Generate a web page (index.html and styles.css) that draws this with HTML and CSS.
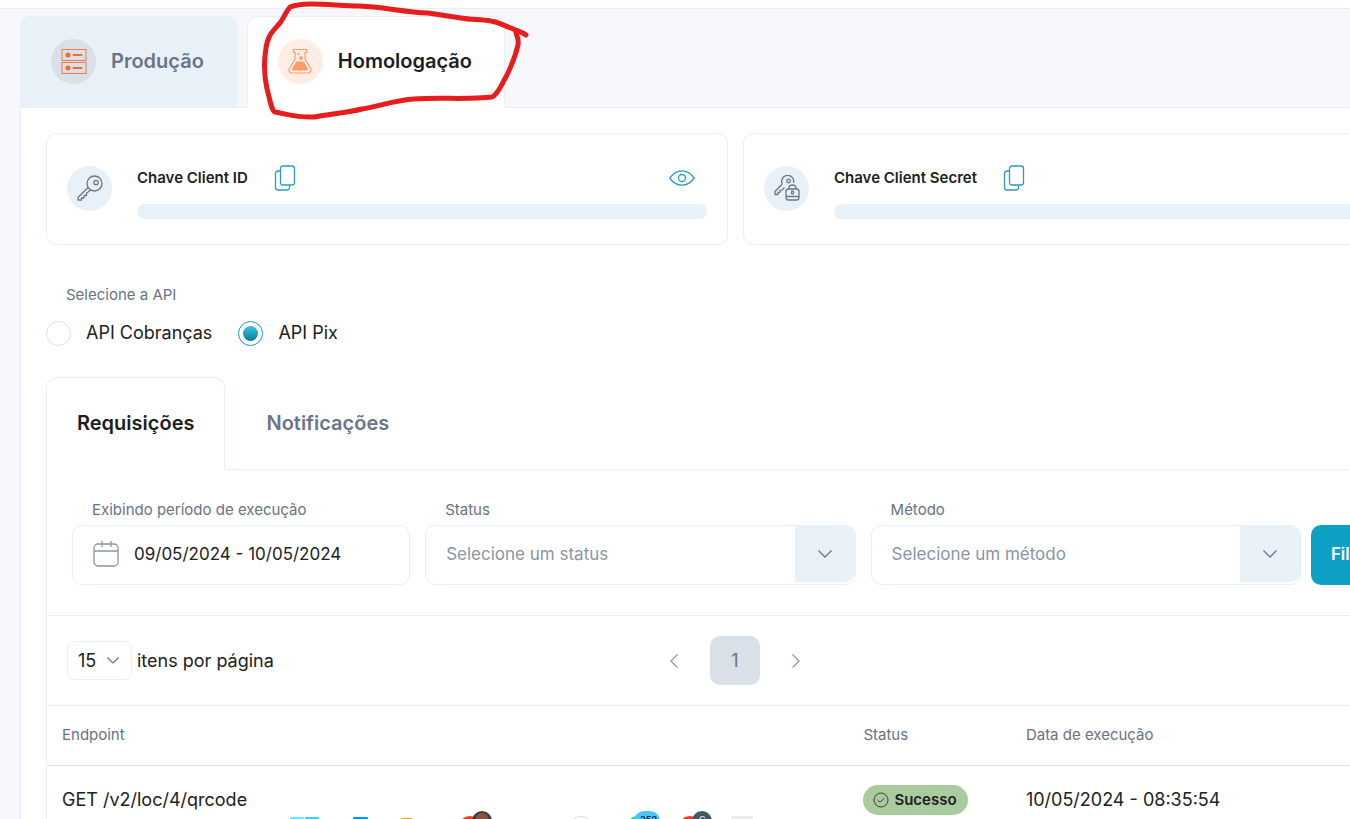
FILE: index.html
```html
<!DOCTYPE html>
<html lang="pt-BR">
<head>
<meta charset="utf-8">
<title>Credenciais da API</title>
<link rel="stylesheet" href="styles.css">
</head>
<body>
<svg class="defs" aria-hidden="true">
  <defs>
    <symbol id="copy" viewBox="0 0 22 26"><rect x="6.500" y="1" width="14" height="19" rx="2.500"/><path d="M6.500 6H4a2.500 2.500 0 0 0-2.500 2.500v14A2.500 2.500 0 0 0 4 25h9a2.500 2.500 0 0 0 2.500-2.500V20"/></symbol>
    <symbol id="chevron" viewBox="0 0 14 8"><path d="M.5.5 7 7 13.500.5"/></symbol>
  </defs>
</svg>
<header class="topbar"></header>
<main class="page">
  <nav class="env-tabs">
    <button class="env-tab env-off" type="button">
      <span class="disc disc-grey"><svg class="server" width="26" height="27" viewBox="0 0 26 27"><rect x="1" y="1.500" width="24" height="11"/><rect x="1" y="14.500" width="24" height="11"/><path class="bar" d="M12.500 7h8M12.500 20h8"/><circle cx="7" cy="7" r="2.500"/><circle cx="7" cy="20" r="2.500"/></svg></span>
      Produção
    </button>
    <button class="env-tab env-on" type="button">
      <span class="disc disc-peach"><svg class="flask" width="24" height="27" viewBox="0 0 24 27"><path d="M5.500 1.500h13v3h-1.500v6.500l5 8.500c2 3.500.8 5.500-2 5.500H4c-2.800 0-4-2-2-5.500L7 11V4.500H5.500z"/><path class="liquid" d="M8.500 13.500h7l3.500 5.500c1.500 2.500.8 3.500-1 3.500H6c-1.800 0-2.500-1-1-3.500z"/><circle cx="10.500" cy="6" r="1.100"/><circle cx="13" cy="10" r="1.900"/></svg></span>
      Homologação
    </button>
  </nav>

  <section class="panel">
    <div class="keys">
      <article class="key-card">
        <span class="disc disc-blue"><svg class="line-icon" width="26" height="26" viewBox="0 0 26 26"><circle cx="17.500" cy="8.500" r="7.500"/><circle cx="19" cy="7.500" r="2.200"/><path d="M11 12.500 1 22.500V25h3.500v-2H7v-2.500h2.500v-2.200l4.200-3.300"/></svg></span>
        <div class="key-body">
          <div class="key-head"><h2>Chave Client ID</h2>
            <button class="icon-btn" type="button" aria-label="Copiar Client ID"><svg class="blue-icon" width="22" height="26"><use href="#copy"/></svg></button>
            <button class="icon-btn eye" type="button" aria-label="Mostrar Client ID"><svg class="blue-icon" width="26" height="16" viewBox="0 0 26 16"><path d="M.8 8C4 3.500 8 .8 13 .8S22 3.500 25.200 8C22 12.500 18 15.200 13 15.200S4 12.500.8 8z"/><circle cx="13" cy="8" r="3.500"/></svg></button>
          </div>
          <div class="mask"></div>
        </div>
      </article>
      <article class="key-card">
        <span class="disc disc-blue"><svg class="line-icon" width="26" height="26" viewBox="0 0 26 26"><path d="M8.300 9a6 6 0 1 1 11.200-1M8.300 9 1 16.500v3h3v-2l2-.2v-2l2-.2 2.500-2.600"/><circle cx="14.500" cy="6" r="1.800"/><rect x="12" y="14" width="13" height="11" rx="2.500"/><path d="M15 14v-1c0-4 7-4 7 0v1M12 21.500h13"/><rect x="17.500" y="16" width="2" height="3" rx="1"/></svg></span>
        <div class="key-body">
          <div class="key-head"><h2>Chave Client Secret</h2>
            <button class="icon-btn" type="button" aria-label="Copiar Client Secret"><svg class="blue-icon" width="22" height="26"><use href="#copy"/></svg></button>
          </div>
          <div class="mask"></div>
        </div>
      </article>
    </div>

    <fieldset class="api">
      <legend>Selecione a API</legend>
      <div class="radios">
        <label><input type="radio" name="api">API Cobranças</label>
        <label><input type="radio" name="api" checked>API Pix</label>
      </div>
    </fieldset>

    <nav class="sub-tabs">
      <button class="sub-tab sub-on" type="button">Requisições</button>
      <button class="sub-tab" type="button">Notificações</button>
    </nav>

    <div class="requests">
      <form class="filters">
        <div class="fields">
          <div class="field">
            <label for="period">Exibindo período de execução</label>
            <div class="control"><svg class="calendar" width="26" height="26" viewBox="0 0 26 26"><rect x="1" y="3" width="24" height="22" rx="4"/><path d="M1 10h24M9 0v6M18 0v6"/></svg><input id="period" type="text" value="09/05/2024 - 10/05/2024"></div>
          </div>
          <div class="field">
            <label for="status">Status</label>
            <div class="control picker"><select id="status"><option>Selecione um status</option></select><span class="drop"><svg width="14" height="8"><use href="#chevron"/></svg></span></div>
          </div>
          <div class="field">
            <label for="method">Método</label>
            <div class="control picker"><select id="method"><option>Selecione um método</option></select><span class="drop"><svg width="14" height="8"><use href="#chevron"/></svg></span></div>
          </div>
        </div>
        <button class="submit" type="button">Filtrar</button>
      </form>

      <div class="paging">
        <div class="per-page">
          <span class="size"><select id="size"><option>15</option></select><svg width="12" height="7"><use href="#chevron"/></svg></span>
          <label for="size">itens por página</label>
        </div>
        <div class="pages">
          <button class="step" type="button" aria-label="Anterior"><svg width="8" height="14" viewBox="0 0 8 14"><path d="M7.500.5 1 7l6.500 6.500"/></svg></button>
          <button class="current" type="button">1</button>
          <button class="step" type="button" aria-label="Próxima"><svg width="8" height="14" viewBox="0 0 8 14"><path d="M.5.5 7 7 .5 13.500"/></svg></button>
        </div>
      </div>

      <table>
        <thead><tr><th class="col-endpoint">Endpoint</th><th class="col-status">Status</th><th>Data de execução</th></tr></thead>
        <tbody><tr><td>GET /v2/loc/4/qrcode</td><td><span class="badge"><svg width="16" height="16" viewBox="0 0 16 16"><circle cx="8" cy="8" r="7"/><path d="m4.500 8 2.500 2.200 4.500-4"/></svg>Sucesso</span></td><td>10/05/2024 - 08:35:54</td></tr></tbody>
      </table>
    </div>
  </section>
</main>

<svg class="marker" width="280" height="125" viewBox="255 0 280 125" aria-hidden="true"><path d="M526 35C521 31 517 31 511 28C502 25 499 22 491 21C480 19 472 20 461 18L428 13C405 12 382 7 360 6C335 6 306 1 290 7C285 13 284 18 280 23C272 32 268 35 266 48C263 66 265 80 267 89C270 99 271 110 275 112C287 114 298 118 315 117C328 114 347 113 362 109C380 106 396 100 414 99C440 97 467 100 492 97C498 95 502 83 506 77C511 67 515 58 518 45C519 38 517 38 516 32"/></svg>

<svg class="dock" width="500" height="9" viewBox="270 810 500 9" aria-hidden="true">
  <rect x="290" y="817" width="14" height="4" rx="1" fill="#71e6fa"/><rect x="305" y="817" width="14" height="4" rx="1" fill="#4cc8f4"/>
  <rect x="353" y="817" width="15" height="4" rx="1" fill="#0a93ee"/><rect x="401" y="818" width="11" height="3" fill="#e2a322"/>
  <circle cx="470" cy="828" r="12" fill="#e83e32"/><circle cx="482" cy="821" r="10" fill="#493b3b"/><ellipse cx="482" cy="818" rx="6" ry="5" fill="#845545"/>
  <circle cx="581" cy="829" r="12.500" fill="#fff" stroke="#d9d9d9"/>
  <circle cx="638" cy="828" r="12" fill="#28d366"/><rect x="634" y="811" width="26" height="20" rx="10" fill="#4cc2ff"/><text x="640" y="823" class="count">352</text>
  <circle cx="690" cy="828" r="12" fill="#e83e32"/><circle cx="702" cy="821" r="10" fill="#455a64"/><text x="699" y="823" class="initial">G</text>
  <rect x="731" y="816" width="22" height="6" rx="2" fill="#ececec"/>
</svg>
</body>
</html>
```
FILE: styles.css
```css
* { box-sizing: border-box; }
html { height: 100%; overflow: hidden; }
body { margin: 0; min-height: 100%; background: #f6f8fc; color: #212121; font: 18px/26px Inter, "Open Sans", sans-serif; }
button, input, select { font: inherit; color: inherit; border: 0; background: none; padding: 0; margin: 0; }
svg { fill: none; flex: none; display: block; }
h2 { margin: 0; font-size: 15px; font-weight: 600; line-height: 20px; }
.defs { position: absolute; width: 0; height: 0; }
.topbar { height: 9px; background: #fff; border-bottom: 1px solid #e7eff7; }
/* The page is wider than the window and runs past its right edge. */
.page { padding: 7px 20px 0; margin-right: -121px; }

.env-tabs { display: flex; gap: 10px; }
.env-tab { display: flex; align-items: center; gap: 15px; height: 92px; padding: 0 32px 2px 30px; border: 1px solid #e7eff7; border-radius: 10px 10px 0 0; font-size: 20px; font-weight: 600; }
.env-off { background: #e8f0f8; color: #6b7489; }
.env-on { position: relative; z-index: 1; background: #fff; border-bottom-color: #fff; color: #1d1d1f; }
.disc { display: flex; align-items: center; justify-content: center; flex: none; width: 45px; height: 45px; border-radius: 50%; }
.disc-grey { background: #d9e0e7; }
.disc-peach { background: #ffede6; }
.disc-blue { background: #e8f0f8; }
.server { stroke: #f37a48; stroke-width: 1; }
.server .bar { stroke: #f86b1d; stroke-width: 2; stroke-linecap: round; }
.server circle { fill: #f86b1d; stroke: none; }
.flask { stroke: #ff9a66; stroke-width: 1.2; stroke-linejoin: round; }
.flask circle, .flask .liquid { fill: #ff9a66; stroke: none; }

.panel { background: #fff; border: 1px solid #e7eff7; margin-top: -1px; padding: 25px 25px 60px; }
.keys { display: grid; grid-template-columns: 1fr 1fr; gap: 15px; }
.key-card { display: flex; align-items: center; gap: 25px; height: 112px; padding: 0 20px 2px; border: 1px solid #e7eff7; border-radius: 10px; }
.key-body { flex: 1; display: grid; gap: 13px; padding-top: 7px; }
.key-head { display: flex; align-items: center; gap: 26px; }
.icon-btn { display: block; }
.eye { margin: 0 12px 0 auto; }
.mask { height: 15px; border-radius: 8px; background: #e8f0f8; }
.line-icon { stroke: #6b7785; stroke-width: 1.3; stroke-linejoin: round; }
.blue-icon { stroke: #299dbe; stroke-width: 1.3; stroke-linejoin: round; }

.api { border: 0; margin: 40px 0 31px; padding: 0; }
.api legend { padding: 0 20px; font-size: 15px; line-height: 20px; color: #687384; }
.radios { display: flex; gap: 26px; padding-top: 15px; }
.radios label { display: flex; align-items: center; gap: 15px; }
.radios input { appearance: none; width: 25px; height: 25px; border: 1px solid #d9e1ea; border-radius: 50%; }
.radios input:checked { padding: 4px; border-color: #179fbe; background: linear-gradient(#35c5e2, #077c98) content-box; }

.sub-tabs { display: flex; gap: 10px; margin-bottom: -1px; }
.sub-tab { height: 93px; padding: 0 30px 2px; border: 1px solid transparent; border-radius: 10px 10px 0 0; font-size: 20px; font-weight: 600; color: #6b7489; }
.sub-on { position: relative; z-index: 1; background: #fff; border-color: #e7eff7; border-bottom-color: #fff; color: #1d1d1f; }
.requests { border: 1px solid #e7eff7; }

.filters { display: flex; align-items: flex-end; gap: 10px; padding: 30px 25px; border-bottom: 1px solid #e7eff7; }
.fields { flex: 1; display: grid; grid-template-columns: 11fr 14fr 14fr; gap: 15px; }
.field { min-width: 0; }
.field label { display: block; padding: 0 20px; margin-bottom: 5px; font-size: 15px; line-height: 20px; color: #687384; }
.control { display: flex; align-items: center; height: 60px; gap: 15px; padding: 0 0 2px 20px; border: 1px solid #e7eff7; border-radius: 10px; overflow: hidden; font-size: 17px; }
.control input, .control select { flex: 1; min-width: 0; height: 100%; appearance: none; }
.picker { color: #8b95a5; gap: 0; }
.drop { display: grid; place-items: center; width: 60px; height: 100%; background: #e8f0f8; border-bottom-right-radius: 10px; }
.drop svg { stroke: #6b7785; stroke-width: 1.3; }
.calendar { stroke: #8b95a5; stroke-width: 1.3; }
.submit { width: 88px; height: 60px; padding-bottom: 2px; border-radius: 10px; background: #0ca1c4; color: #fff; font-size: 17px; font-weight: 600; }

.paging { display: grid; grid-template-columns: 1fr auto 1fr; align-items: center; height: 90px; padding: 0 21px 0 20px; border-bottom: 1px solid #e7eff7; }
.per-page { display: flex; align-items: center; gap: 5px; }
.size { display: flex; align-items: center; width: 65px; height: 39px; padding: 0 12px 0 10px; border: 1px solid #e7eff7; border-radius: 8px; }
.size select { flex: 1; min-width: 0; appearance: none; }
.size svg { stroke: #7d5a55; stroke-width: 1.3; }
.pages { display: flex; align-items: center; gap: 32px; }
.current { width: 50px; height: 49px; border-radius: 10px; background: #d9e0e7; color: #66718a; }
.step svg { stroke: #8b9ab5; stroke-width: 1.3; }

table { width: 100%; border-collapse: collapse; table-layout: fixed; text-align: left; }
th { height: 59px; padding: 0 15px; border-bottom: 1px solid #d5e0e8; font-size: 15px; font-weight: 400; color: #687384; }
td { height: 70px; padding: 0 15px; white-space: nowrap; }
.col-endpoint { width: 58.2%; }
.col-status { width: 11.8%; }
.badge { display: inline-flex; align-items: center; gap: 5px; height: 30px; padding: 0 11px 0 10px; border-radius: 15px; background: #a9cb9e; font-size: 15px; font-weight: 600; vertical-align: middle; }
.badge svg { stroke: #39443a; }

.marker { position: absolute; left: 255px; top: 0; z-index: 2; pointer-events: none; stroke: #e71d1d; stroke-width: 5; stroke-linecap: round; stroke-linejoin: round; }
.dock { position: fixed; left: 270px; bottom: 0; z-index: 2; }
.count { font: bold 9px Inter, sans-serif; fill: #142630; }
.initial { font: 9px Inter, sans-serif; fill: #fff; }
```
